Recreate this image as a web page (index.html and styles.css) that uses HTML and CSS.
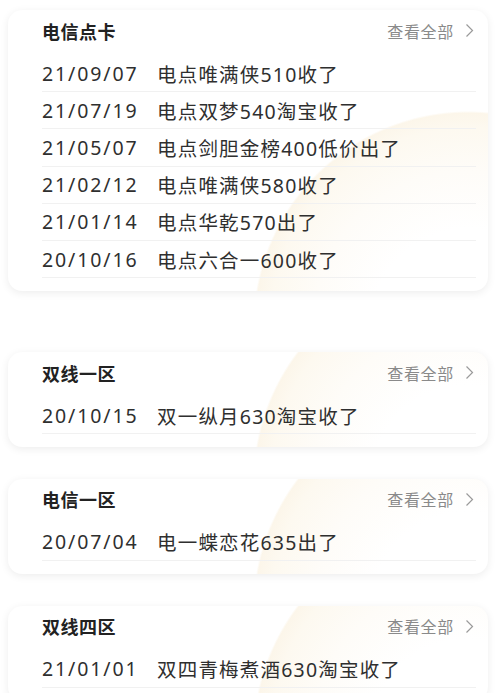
FILE: index.html
```html
<!DOCTYPE html>
<html lang="zh-CN">
<head>
<meta charset="utf-8">
<title>收卡记录</title>
<link rel="stylesheet" href="styles.css">
</head>
<body>
<main class="list">
  <section class="card card-first">
    <header class="card-head">
      <h2 class="card-title">电信点卡</h2>
      <a class="more">查看全部<svg class="chev" viewBox="0 0 9 15" width="9" height="15"><polyline points="1.5,1.5 7.5,7.5 1.5,13.5" fill="none" stroke="#9a9a9a" stroke-width="1.2"/></svg></a>
    </header>
    <ul class="rows">
      <li class="row"><span class="date">21/09/07</span><span class="info">电点唯满侠510收了</span></li>
      <li class="row"><span class="date">21/07/19</span><span class="info">电点双梦540淘宝收了</span></li>
      <li class="row"><span class="date">21/05/07</span><span class="info">电点剑胆金榜400低价出了</span></li>
      <li class="row"><span class="date">21/02/12</span><span class="info">电点唯满侠580收了</span></li>
      <li class="row"><span class="date">21/01/14</span><span class="info">电点华乾570出了</span></li>
      <li class="row"><span class="date">20/10/16</span><span class="info">电点六合一600收了</span></li>
    </ul>
  </section>
  <section class="card">
    <header class="card-head">
      <h2 class="card-title">双线一区</h2>
      <a class="more">查看全部<svg class="chev" viewBox="0 0 9 15" width="9" height="15"><polyline points="1.5,1.5 7.5,7.5 1.5,13.5" fill="none" stroke="#9a9a9a" stroke-width="1.2"/></svg></a>
    </header>
    <ul class="rows">
      <li class="row"><span class="date">20/10/15</span><span class="info">双一纵月630淘宝收了</span></li>
    </ul>
  </section>
  <section class="card">
    <header class="card-head">
      <h2 class="card-title">电信一区</h2>
      <a class="more">查看全部<svg class="chev" viewBox="0 0 9 15" width="9" height="15"><polyline points="1.5,1.5 7.5,7.5 1.5,13.5" fill="none" stroke="#9a9a9a" stroke-width="1.2"/></svg></a>
    </header>
    <ul class="rows">
      <li class="row"><span class="date">20/07/04</span><span class="info">电一蝶恋花635出了</span></li>
    </ul>
  </section>
  <section class="card">
    <header class="card-head">
      <h2 class="card-title">双线四区</h2>
      <a class="more">查看全部<svg class="chev" viewBox="0 0 9 15" width="9" height="15"><polyline points="1.5,1.5 7.5,7.5 1.5,13.5" fill="none" stroke="#9a9a9a" stroke-width="1.2"/></svg></a>
    </header>
    <ul class="rows">
      <li class="row"><span class="date">21/01/01</span><span class="info">双四青梅煮酒630淘宝收了</span></li>
    </ul>
  </section>
</main>
</body>
</html>
```
FILE: styles.css
```css
html, body {
  margin: 0;
  padding: 0;
  background: #ffffff;
}
body {
  font-family: "Noto Sans", "Noto Sans CJK SC", sans-serif;
  color: #333333;
}
.list {
  display: flex;
  flex-direction: column;
  gap: 31.5px;
  padding: 10px 12px 0 8px;
}
.card {
  border-radius: 14px;
  box-shadow: 0 2px 9px rgba(0, 0, 0, 0.075);
  padding: 0 12px 13px 34px;
  background:
    radial-gradient(circle 215px at 460px calc(100% + 35px),
      #ffffff 0, #ffffff 45%, #fefcf8 72%, #fdf9f0 92%, #fcf6ea 99%, rgba(255,255,255,0) 100%),
    #ffffff;
}
.card-first {
  margin-bottom: 29.5px;
}
.card-head {
  height: 41px;
  margin-bottom: 4px;
  display: flex;
  align-items: center;
  justify-content: space-between;
}
.card-title {
  margin: 0;
  font-size: 18px;
  letter-spacing: 0.5px;
  font-weight: 700;
  color: #222222;
}
.more {
  display: flex;
  align-items: center;
  gap: 11px;
  font-size: 16px;
  letter-spacing: 0.7px;
  color: #8a8a8a;
  padding-right: 2px;
}
.chev {
  display: block;
}
.rows {
  list-style: none;
  margin: 0;
  padding: 0;
}
.row {
  box-sizing: border-box;
  height: 37.2px;
  display: flex;
  align-items: center;
  border-bottom: 1px solid #f1f1f1;
  font-size: 19.5px;
  letter-spacing: 1.2px;
  color: #2f2f2f;
  white-space: nowrap;
}
.date {
  width: 115px;
  flex: none;
  letter-spacing: 1.9px;
}
```
